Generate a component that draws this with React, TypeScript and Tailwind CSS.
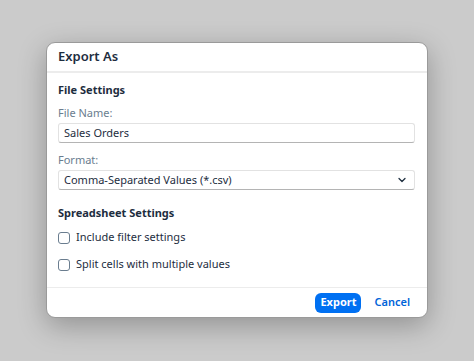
import { ChevronDown } from "lucide-react";

function Checkbox({ label }: { label: string }) {
  return (
    <label className="flex items-center gap-[6px] h-[13px]">
      <span className="w-[12px] h-[12px] rounded-[3px] border border-[#6a7d8f] bg-white" />
      <span className="text-[11px] text-[#1d2d3e]">{label}</span>
    </label>
  );
}

export default function App() {
  return (
    <div
      className="w-[474px] h-[361px] bg-[#cbcbcb] flex items-start pl-[46px] pt-[42px]"
      style={{ fontFamily: '"Noto Sans", "Open Sans", sans-serif' }}
    >
      <div className="w-[382px] h-[276px] bg-white rounded-[9px] border border-[#9a9a9a] shadow-[0_8px_28px_rgba(0,0,0,0.28)] flex flex-col overflow-hidden">
        <div className="h-[30px] flex items-center px-[11px] border-b-2 border-[#ececec]">
          <h1 className="text-[13px] font-semibold text-[#1d2d3e]">Export As</h1>
        </div>
        <div className="flex-1 px-[11px] pt-[9px]">
          <h2 className="text-[11px] font-bold text-[#1d2d3e] leading-[16px]">File Settings</h2>
          <div className="mt-[8px] text-[11px] text-[#6a7d8f] leading-[14px]">File Name:</div>
          <div className="mt-[3px] h-[20px] w-[357px] rounded-[3px] border border-[#e2e2e2] border-b-[#b4b4b4] flex items-center px-[5px] text-[11px] text-[#1d2d3e]">
            Sales Orders
          </div>
          <div className="mt-[10px] text-[11px] text-[#6a7d8f] leading-[14px]">Format:</div>
          <div className="mt-[3px] h-[20px] w-[357px] rounded-[3px] border border-[#e2e2e2] border-b-[#b4b4b4] flex items-center justify-between px-[5px] text-[11px] text-[#1d2d3e]">
            <span>Comma-Separated Values (*.csv)</span>
            <ChevronDown className="w-[12px] h-[12px] mr-[1px]" strokeWidth={2.5} />
          </div>
          <h2 className="mt-[15px] text-[11px] font-bold text-[#1d2d3e] leading-[16px]">Spreadsheet Settings</h2>
          <div className="mt-[10px] flex flex-col gap-[14px]">
            <Checkbox label="Include filter settings" />
            <Checkbox label="Split cells with multiple values" />
          </div>
        </div>
        <div className="h-[30px] border-t border-[#ececec] flex items-center justify-end gap-[13px] pr-[17px]">
          <button className="h-[20px] px-[5px] rounded-[6px] bg-[#0070f2] text-white text-[11px] font-bold">Export</button>
          <button className="text-[11px] font-semibold text-[#0064d9]">Cancel</button>
        </div>
      </div>
    </div>
  );
}
